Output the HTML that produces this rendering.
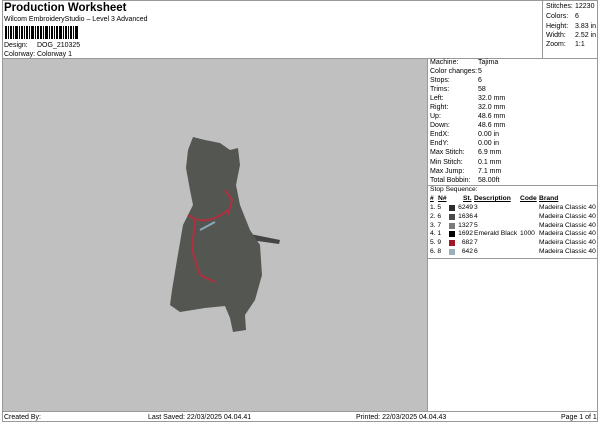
<!DOCTYPE html>
<html><head><meta charset="utf-8"><style>
*{margin:0;padding:0;box-sizing:border-box}
body{width:600px;height:424px;background:#fff;font-family:"Liberation Sans",Arial,sans-serif;font-size:7px;color:#000;position:relative;overflow:hidden}
.abs{position:absolute}
.t{position:absolute;white-space:nowrap;line-height:9px}
.ss{font-size:6.7px;line-height:8.8px}
</style></head><body>
<div class="abs" style="left:2px;top:0;width:596px;height:422px;border:1px solid #999"></div>
<div class="abs" style="left:2px;top:58px;width:596px;height:1px;background:#999"></div>
<div class="abs" style="left:542px;top:0;width:1px;height:58px;background:#999"></div>
<div class="abs" style="left:3px;top:59px;width:424px;height:352px;background:#c0c0c0"></div>
<div class="abs" style="left:427px;top:59px;width:1px;height:353px;background:#999"></div>
<div class="abs" style="left:2px;top:411px;width:596px;height:1px;background:#999"></div>
<div class="abs" style="left:427px;top:185px;width:171px;height:1px;background:#999"></div>
<div class="abs" style="left:427px;top:258px;width:171px;height:1px;background:#999"></div>

<div class="t" style="left:4px;top:2px;font-size:11.5px;font-weight:bold;line-height:13px">Production Worksheet</div>
<div class="t" style="left:4px;top:15px">Wilcom EmbroideryStudio – Level 3 Advanced</div>
<svg class="abs" style="left:5px;top:26px" width="75" height="13">
<g fill="#000">
<rect x="0" y="0" width="2" height="13"/><rect x="3" y="0" width="1" height="13"/><rect x="5" y="0" width="2" height="13"/><rect x="8" y="0" width="1" height="13"/><rect x="10" y="0" width="3" height="13"/><rect x="14" y="0" width="1" height="13"/><rect x="16" y="0" width="2" height="13"/><rect x="19" y="0" width="1" height="13"/><rect x="21" y="0" width="2" height="13"/><rect x="24" y="0" width="1" height="13"/><rect x="26" y="0" width="3" height="13"/><rect x="30" y="0" width="1" height="13"/><rect x="32" y="0" width="2" height="13"/><rect x="35" y="0" width="2" height="13"/><rect x="38" y="0" width="1" height="13"/><rect x="40" y="0" width="3" height="13"/><rect x="44" y="0" width="1" height="13"/><rect x="46" y="0" width="2" height="13"/><rect x="49" y="0" width="1" height="13"/><rect x="51" y="0" width="2" height="13"/><rect x="54" y="0" width="3" height="13"/><rect x="58" y="0" width="1" height="13"/><rect x="60" y="0" width="2" height="13"/><rect x="63" y="0" width="1" height="13"/><rect x="65" y="0" width="2" height="13"/><rect x="68" y="0" width="1" height="13"/><rect x="70" y="0" width="3" height="13"/>
</g></svg>
<div class="t" style="left:4px;top:41px">Design:</div><div class="t" style="left:37px;top:41px">DOG_210325</div>
<div class="t" style="left:4px;top:50px">Colorway:</div><div class="t" style="left:37px;top:50px">Colorway 1</div>

<div class="t" style="left:546px;top:2px">Stitches:</div><div class="t" style="left:575px;top:2px">12230</div>
<div class="t" style="left:546px;top:12px">Colors:</div><div class="t" style="left:575px;top:12px">6</div>
<div class="t" style="left:546px;top:22px">Height:</div><div class="t" style="left:575px;top:22px">3.83 in</div>
<div class="t" style="left:546px;top:31px">Width:</div><div class="t" style="left:575px;top:31px">2.52 in</div>
<div class="t" style="left:546px;top:40px">Zoom:</div><div class="t" style="left:575px;top:40px">1:1</div>

<div style="position:absolute;left:430px;top:58px;line-height:9.05px">
<div>Machine:</div><div>Color changes:</div><div>Stops:</div><div>Trims:</div><div>Left:</div><div>Right:</div><div>Up:</div><div>Down:</div><div>EndX:</div><div>EndY:</div><div>Max Stitch:</div><div>Min Stitch:</div><div>Max Jump:</div><div>Total Bobbin:</div>
</div>
<div style="position:absolute;left:478px;top:58px;line-height:9.05px">
<div>Tajima</div><div>5</div><div>6</div><div>58</div><div>32.0 mm</div><div>32.0 mm</div><div>48.6 mm</div><div>48.6 mm</div><div>0.00 in</div><div>0.00 in</div><div>6.9 mm</div><div>0.1 mm</div><div>7.1 mm</div><div>58.00ft</div>
</div>
<div class="t ss" style="left:430px;top:186px">Stop Sequence:</div>
<div class="t ss" style="left:430px;top:195px;font-weight:bold;text-decoration:underline">#</div>
<div class="t ss" style="left:438px;top:195px;font-weight:bold;text-decoration:underline">N#</div>
<div class="t ss" style="left:463px;top:195px;font-weight:bold;text-decoration:underline">St.</div>
<div class="t ss" style="left:474px;top:195px;font-weight:bold;text-decoration:underline">Description</div>
<div class="t ss" style="left:520px;top:195px;font-weight:bold;text-decoration:underline">Code</div>
<div class="t ss" style="left:539px;top:195px;font-weight:bold;text-decoration:underline">Brand</div>

<div class="ss" style="position:absolute;left:430px;top:204px">
<div>1. 5</div><div>2. 6</div><div>3. 7</div><div>4. 1</div><div>5. 9</div><div>6. 8</div></div>
<div class="abs" style="left:449px;top:205px;width:6px;height:6px;background:#2e2e2e"></div>
<div class="abs" style="left:449px;top:214px;width:6px;height:6px;background:#4a4a4a"></div>
<div class="abs" style="left:449px;top:223px;width:6px;height:6px;background:#7a7a7a"></div>
<div class="abs" style="left:449px;top:231px;width:6px;height:6px;background:#000"></div>
<div class="abs" style="left:449px;top:240px;width:6px;height:6px;background:#a01828"></div>
<div class="abs" style="left:449px;top:249px;width:6px;height:6px;background:#9ab0b8"></div>
<div class="ss" style="position:absolute;left:455px;top:204px;width:18px;text-align:right">
<div>6249</div><div>1636</div><div>1327</div><div>1692</div><div>682</div><div>642</div></div>
<div class="ss" style="position:absolute;left:474px;top:204px">
<div>3</div><div>4</div><div>5</div><div>Emerald Black</div><div>7</div><div>6</div></div>
<div class="t ss" style="left:520px;top:230.4px">1000</div>
<div class="ss" style="position:absolute;left:539px;top:204px">
<div>Madeira Classic 40</div><div>Madeira Classic 40</div><div>Madeira Classic 40</div><div>Madeira Classic 40</div><div>Madeira Classic 40</div><div>Madeira Classic 40</div></div>

<svg class="abs" style="left:0;top:0" width="430" height="411">
<path d="M250 234 L280 240 L279 244 L250 240Z" fill="#444"/>
<path d="M193 137 L188 150 L186 168 L190 190 L193 205 L183 225 L177 260 L172 290 L170 305 L180 312 L205 308 L225 306 L230 318 L233 332 L246 330 L245 315 L255 300 L262 275 L260 245 L250 230 L240 205 L236 185 L240 165 L238 148 L230 150 L220 143 L205 140 Z" fill="#535651"/>
<path d="M188 215 Q205 228 228 210" stroke="#b03040" stroke-width="2" fill="none"/>
<path d="M195 220 L192 250 L200 275 L215 282" stroke="#b03040" stroke-width="2" fill="none"/>
<path d="M225 190 L232 200 L228 215" stroke="#b03040" stroke-width="2" fill="none"/>
<path d="M200 230 L215 222" stroke="#8ab" stroke-width="2" fill="none"/>
</svg>

<div class="t" style="left:4px;top:413px">Created By:</div>
<div class="t" style="left:148px;top:413px">Last Saved: 22/03/2025 04.04.41</div>
<div class="t" style="left:356px;top:413px">Printed: 22/03/2025 04.04.43</div>
<div class="t" style="left:561px;top:413px">Page 1 of 1</div>
</body></html>
